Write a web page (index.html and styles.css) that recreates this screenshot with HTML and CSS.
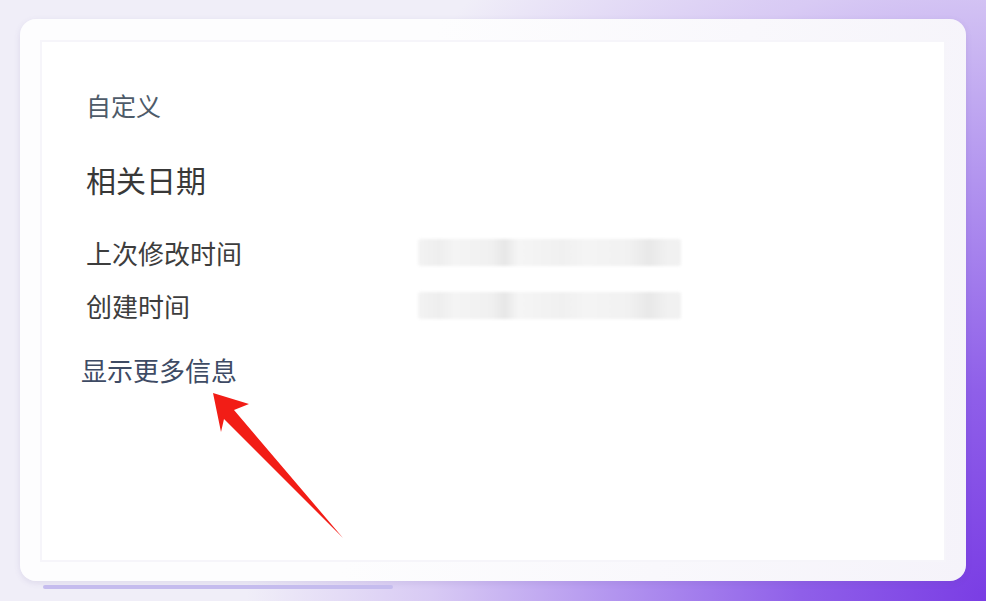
FILE: index.html
```html
<!DOCTYPE html>
<html lang="zh-CN">
<head>
<meta charset="utf-8">
<title>相关日期</title>
<link rel="stylesheet" href="styles.css">
</head>
<body>
	<div class="card">
		<div class="panel">
			<div class="custom">自定义</div>
			<div class="heading">相关日期</div>
			<div class="rows">
				<div class="row">
					<span class="label">上次修改时间</span>
					<span class="blur"></span>
				</div>
				<div class="row">
					<span class="label">创建时间</span>
					<span class="blur"></span>
				</div>
			</div>
			<div class="more">显示更多信息</div>
		</div>
	</div>
	<div class="scrollbar"></div>
	<svg class="arrow" width="986" height="601" viewBox="0 0 986 601">
		<polygon points="213,393 249,404 234,410 343,538 224,419 221,432" fill="#f21d16"/>
	</svg>
</body>
</html>
```
FILE: styles.css
```css
html, body {
	margin: 0;
	height: 100%;
}

body {
	position: relative;
	overflow: hidden;
	padding: 19px 20px 0;
	box-sizing: border-box;
	font-family: "Noto Sans CJK SC", "Noto Sans", sans-serif;
	background:
		radial-gradient(ellipse 75% 140% at 100% 100%, #7a3de4 0%, #8f5fe9 25%, #b294ef 50%, #d8caf4 75%, rgba(239,237,248,0) 100%),
		radial-gradient(ellipse 25% 20% at 100% 0%, #d6c6f4 0%, rgba(239,237,248,0) 100%),
		#f0eef8;
}

.card {
	height: 562px;
	border-radius: 16px;
	padding: 21px 20px 19px;
	box-sizing: border-box;
	background: linear-gradient(100deg, #fdfdfe 40%, #f5f3fa 100%);
	box-shadow: 0 2px 6px rgba(90, 70, 150, 0.12);
}

.panel {
	height: 100%;
	box-sizing: border-box;
	border: 2px solid #f6f5fa;
	background: #fff;
	padding: 46px 44px 0;
}

.custom {
	font-size: 25px;
	line-height: 34px;
	color: #4e5b69;
}

.heading {
	margin-top: 37px;
	font-size: 30px;
	line-height: 40px;
	color: #383838;
}

.rows {
	margin-top: 35px;
	display: flex;
	flex-direction: column;
	gap: 17px;
}

.row {
	display: flex;
	align-items: center;
	height: 36px;
}

.label {
	width: 332px;
	font-size: 26px;
	color: #3d3d3d;
}

.blur {
	width: 263px;
	height: 27px;
	border-radius: 3px;
	filter: blur(1.5px);
	background: linear-gradient(90deg, #f3f3f3 0%, #eeeeee 8%, #f4f4f4 14%, #f0f0f0 28%, #e7e7e7 33%, #f5f5f5 38%, #f0f0f0 55%, #f4f4f4 64%, #f1f1f1 80%, #e8e8e8 88%, #f1f1f1 95%);
}

.more {
	margin-top: 30px;
	margin-left: -5px;
	font-size: 26px;
	line-height: 34px;
	color: #3e4b64;
}

.scrollbar {
	margin: 4px 0 0 23px;
	width: 350px;
	height: 4px;
	border-radius: 2px;
	background: #c5bcee;
}

.arrow {
	position: absolute;
	left: 0;
	top: 0;
	filter: blur(0.6px);
}
```
